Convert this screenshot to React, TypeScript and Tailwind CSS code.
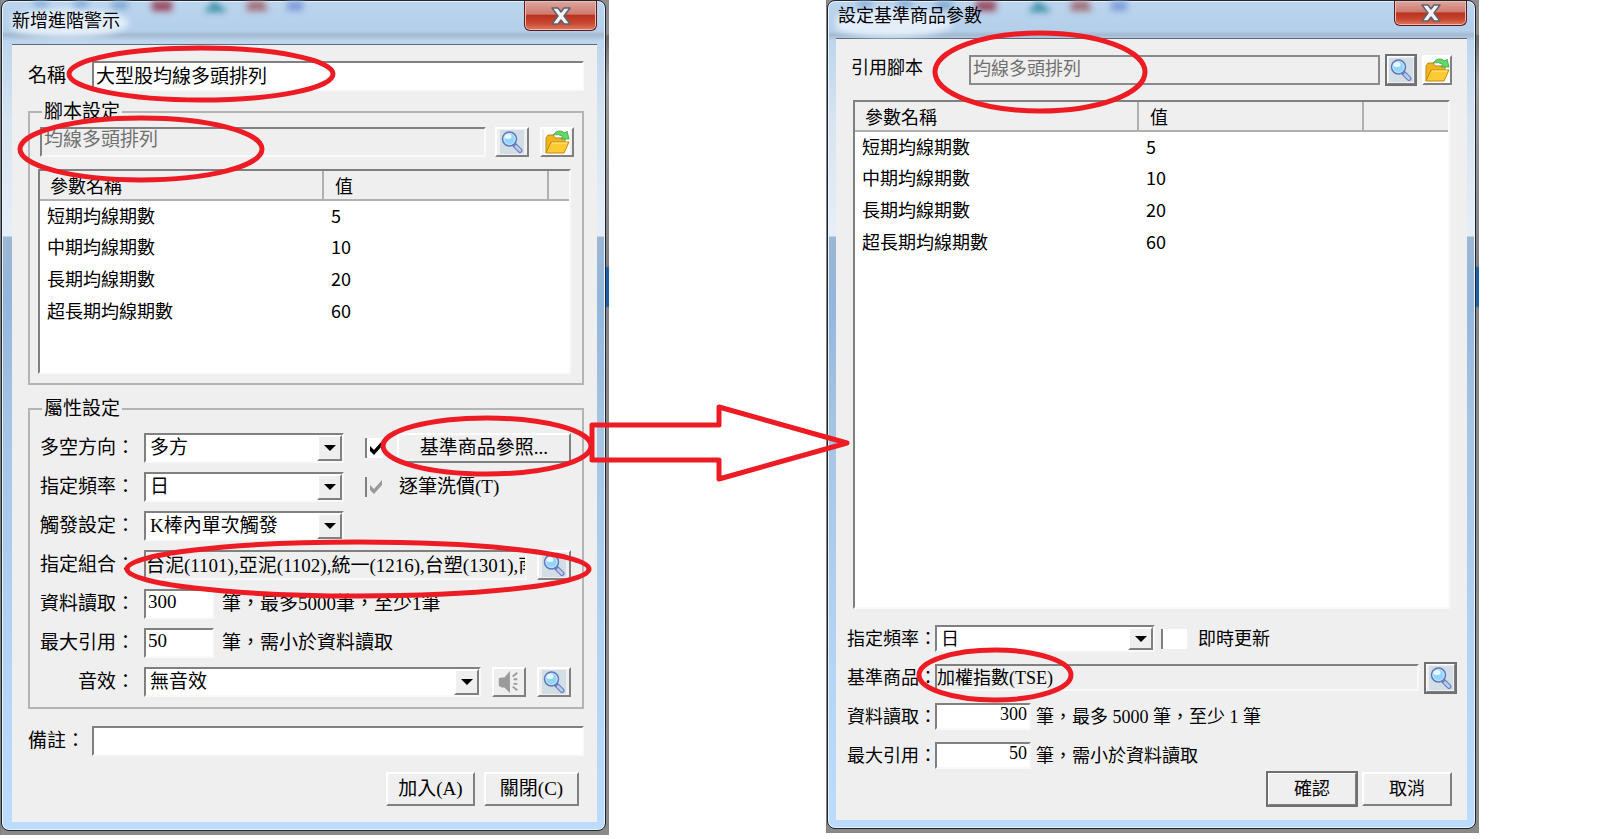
import type { ComponentProps, ReactNode } from 'react'
import { clsx } from 'clsx'

const SANS = "font-['Noto_Sans_CJK_TC',sans-serif]"
const SERIF = "font-['Liberation_Serif','Noto_Sans_CJK_TC',serif]"

const RAISED = 'border-2 border-t-white border-l-white border-r-[#808080] border-b-[#808080] bg-[#efefef]'
const SUNKEN = 'border-2 border-t-[#808080] border-l-[#808080] border-r-[#f9f9f9] border-b-[#f9f9f9]'

const params = [
  { name: '短期均線期數', value: 5 },
  { name: '中期均線期數', value: 10 },
  { name: '長期均線期數', value: 20 },
  { name: '超長期均線期數', value: 60 },
]

function SearchIcon() {
  return (
    <svg viewBox="0 0 24 24" className="h-6 w-6" aria-hidden="true">
      <rect width="24" height="24" fill="#d3dde6" />
      <path d="M15 15.500l5 5" stroke="#6f82bd" strokeWidth="5" strokeLinecap="round" />
      <path d="M16 16.500l4 4" stroke="#b9cdf2" strokeWidth="2.500" strokeLinecap="round" />
      <circle cx="9.500" cy="9" r="7" fill="#8fd6fa" stroke="#6278be" strokeWidth="1.500" />
      <circle cx="9.500" cy="9" r="5.500" fill="none" stroke="#cfe3fa" />
      <ellipse cx="8" cy="6.500" rx="3.500" ry="2.500" fill="#e9f8ff" />
    </svg>
  )
}

function FolderIcon() {
  return (
    <svg viewBox="0 0 26 26" className="h-[26px] w-[26px]" aria-hidden="true">
      <rect width="26" height="26" fill="#fdfdfd" />
      <path d="M2 24V9l2-3h5l2 3h10v5" fill="#f2b41d" stroke="#b98a17" strokeLinejoin="round" />
      <path d="M2 24l5-11h18l-5 11z" fill="#fcca33" stroke="#c28d12" strokeLinejoin="round" />
      <path d="M8 14h15" stroke="#ffe99a" />
      <path d="M9 6q5-7 12-2l2-2 2 8-8 0 2-2.500q-4-3-10-1.500z" fill="#63d866" stroke="#36a345" strokeWidth=".8" strokeLinejoin="round" />
    </svg>
  )
}

function SpeakerIcon() {
  return (
    <svg viewBox="0 0 26 26" className="h-6 w-6" aria-hidden="true">
      <path d="M2 9l3-1h3l6-7v24l-6-6H5l-3-2z" fill="#9b9b9b" />
      <path d="M17 7l5-4M18 10h4M18 15h4M17 18l5 4" stroke="#9b9b9b" strokeWidth="2" />
    </svg>
  )
}

function IconButton({ label, className, ...props }: ComponentProps<'button'> & { label: string }) {
  return (
    <button
      type="button"
      aria-label={label}
      className={clsx('flex shrink-0 items-center justify-center', RAISED, className)}
      {...props}
    />
  )
}

function TextInput({ className, ...props }: ComponentProps<'input'>) {
  return <input type="text" className={clsx('min-w-0 pb-1 outline-none', SUNKEN, className)} {...props} />
}

function Select({ id, value, className }: { id: string; value: string; className?: string }) {
  return (
    <div className={clsx('relative', className)}>
      <select id={id} defaultValue={value} className={clsx('h-full w-full appearance-none bg-white pr-7 pl-1', SUNKEN)}>
        <option>{value}</option>
      </select>
      <span
        className={clsx(
          'pointer-events-none absolute top-[2px] right-[2px] bottom-[2px] flex w-[25px] items-center justify-center',
          RAISED,
        )}
      >
        <svg viewBox="0 0 12 6" className="h-[6px] w-3" aria-hidden="true">
          <path d="M0 0h12L6 6z" />
        </svg>
      </span>
    </div>
  )
}

function CheckBox({ className, ...props }: ComponentProps<'input'>) {
  return (
    <span className="relative flex shrink-0">
      <input
        type="checkbox"
        className={clsx('h-5 appearance-none border-l-2 border-[#808080] bg-white disabled:bg-transparent', className)}
        {...props}
      />
      {props.defaultChecked && (
        <svg viewBox="0 0 14 14" className="pointer-events-none absolute top-[3px] left-1 h-[14px] w-[14px]" aria-hidden="true">
          <path d="M1 5l4 4 8-9v5l-8 9-4-4z" fill={props.disabled ? '#9a9a9a' : '#000'} />
        </svg>
      )}
    </span>
  )
}

function ParamTable({ className }: { className: string }) {
  return (
    <div className={clsx('bg-white', SUNKEN, SANS, className)}>
      <table className="w-full table-fixed border-collapse text-left text-[18px] leading-6">
        <thead>
          <tr className="h-[29px] border-b-2 border-[#b0b0b0] bg-[#efefef]">
            <th className="w-[283px] border-r-2 border-[#b0b0b0] p-0 pl-[10px] font-normal">參數名稱</th>
            <th className="w-[225px] border-r-2 border-[#b0b0b0] p-0 pl-[11px] font-normal">值</th>
            <th className="p-0" />
          </tr>
        </thead>
        <tbody>
          {params.map((p) => (
            <tr key={p.name} className="h-8">
              <td className="p-0 pb-1 pl-[7px]">{p.name}</td>
              <td className="p-0 pb-1 pl-2">{p.value}</td>
              <td />
            </tr>
          ))}
        </tbody>
      </table>
    </div>
  )
}

interface DialogProps {
  title: string
  frameClass: string
  barClass: string
  children: ReactNode
}

function Dialog({ title, frameClass, barClass, children }: DialogProps) {
  return (
    <div className="border-l border-[#808080] bg-[linear-gradient(#8d8d8d_0_34px,#6b6b6b_36px,#9a9a9a_80px,#808080_266px,#1f5fa8_268px_306px,#858585_308px,#8a8a8a)] pr-[3px] pb-1">
      <section
        className={clsx(
          'rounded-lg border border-[#20262e] bg-[linear-gradient(#bcd5ee_0,#b4cfea_30px,#a3b9d0_34px,#bdd6ee_40px,#d7e4f1_120px,#e6eff8_235px,#9cb7d3_236px,#93b6dc_300px,#a5c3e3_50%,#b4d4f6_80%,#bbdcfd)] pr-2 pb-2 shadow-[inset_0_0_0_1px_#e8f2fc]',
          frameClass,
        )}
      >
        <header className={clsx('relative flex justify-between', barClass)}>
          <svg className="pointer-events-none absolute top-0 left-0 h-9 w-[420px] blur-[3px]" aria-hidden="true">
            <ellipse cx="55" cy="22" rx="62" ry="14" fill="#e3eefa" />
            <path d="M22 0h14v6H22zM62 0h14v7H62zM100 0h16v8h-16z" fill="#7fa9d3" />
            <path d="M140 0h20v10h-20z" fill="#984860" />
            <path d="M202 0l14 11h-24z" fill="#3c8fa5" />
            <path d="M236 0h16l4 10h-22z" fill="#a3707a" />
            <path d="M275 0h16v10h-16z" fill="#7f9fda" />
          </svg>
          <h1 className={clsx('relative text-[18px] leading-6', SANS)}>{title}</h1>
          <button
            type="button"
            aria-label="關閉"
            className="relative flex h-full w-[73px] items-center justify-center rounded-b-md border border-t-0 border-[#5b1c20] bg-[linear-gradient(#dca79f,#cf7a6e_45%,#b9331f_50%,#c8452f_75%,#de7a60)] shadow-[inset_0_0_0_1px_#eebbb0]"
          >
            <svg viewBox="0 0 20 18" className="h-[18px] w-5" aria-hidden="true">
              <path d="M1 1h6l3 4 3-4h6l-6 8 6 8h-6l-3-4-3 4H1l6-8z" fill="#f4f4f4" stroke="#5d6270" strokeWidth="1.500" strokeLinejoin="round" />
            </svg>
          </button>
        </header>
        {children}
      </section>
    </div>
  )
}

function AlertDialog() {
  const label = 'w-[104px] shrink-0 whitespace-nowrap'
  const row = 'flex h-[30px] items-center'
  return (
    <Dialog title="新增進階警示" frameClass="pl-[10px]" barClass="mb-[13px] h-[30px] items-end">
      <form className={clsx('border-t border-[#5b6b7c] bg-[#efefef] pt-4 pr-[13px] pb-4 pl-4 text-[19px] leading-[22px]', SERIF)}>
        <div className={row}>
          <label htmlFor="name" className="w-16 shrink-0">名稱</label>
          <TextInput id="name" defaultValue="大型股均線多頭排列" className="h-full flex-1 bg-white px-[2px]" />
        </div>

        <fieldset className="mt-[10px] border-2 border-[#b4b4b4] pr-2 pb-[9px] pl-2">
          <legend className="ml-1 px-[2px]">腳本設定</legend>
          <div className="mt-1 flex h-[30px] pl-[2px]">
            <TextInput aria-label="腳本" readOnly value="均線多頭排列" className="flex-1 px-[2px] text-[#707070]" />
            <IconButton label="搜尋腳本" className="ml-[9px] w-[34px]"><SearchIcon /></IconButton>
            <IconButton label="開啟腳本" className="ml-[11px] w-[34px]"><FolderIcon /></IconButton>
          </div>
          <ParamTable className="mt-3 mr-[3px] h-[205px]" />
        </fieldset>

        <fieldset className="mt-[13px] border-2 border-[#b4b4b4] pr-[11px] pb-[10px] pl-[10px]">
          <legend className="ml-[2px] px-[2px]">屬性設定</legend>
          <div className="mt-[13px] flex flex-col gap-[9px]">
            <div className={row}>
              <label htmlFor="side" className={label}>多空方向：</label>
              <Select id="side" value="多方" className="h-full w-[200px]" />
              <div className="ml-[21px] flex h-full flex-1 items-center gap-[14px]">
                <CheckBox defaultChecked aria-label="使用基準商品" className="w-[18px]" />
                <button type="button" className={clsx('h-full flex-1 whitespace-nowrap', RAISED)}>基準商品參照...</button>
              </div>
            </div>
            <div className={row}>
              <label htmlFor="freq" className={label}>指定頻率：</label>
              <Select id="freq" value="日" className="h-full w-[200px]" />
              <label className="ml-[21px] flex items-center gap-4">
                <CheckBox defaultChecked disabled className="w-[18px]" />
                逐筆洗價(T)
              </label>
            </div>
            <div className={row}>
              <label htmlFor="trigger" className={label}>觸發設定：</label>
              <Select id="trigger" value="K棒內單次觸發" className="h-full w-[200px]" />
            </div>
            <div className={row}>
              <label htmlFor="group" className={label}>指定組合：</label>
              <TextInput
                id="group"
                readOnly
                value="台泥(1101),亞泥(1102),統一(1216),台塑(1301),南亞(1303)"
                className="h-full flex-1"
              />
              <IconButton label="選擇組合" className="ml-[10px] h-full w-[34px]"><SearchIcon /></IconButton>
            </div>
            <div className={row}>
              <label htmlFor="bars" className={label}>資料讀取：</label>
              <TextInput id="bars" defaultValue="300" className="h-full w-[70px] bg-white px-[2px]" />
              <span className="ml-2">筆，最多5000筆，至少1筆</span>
            </div>
            <div className={row}>
              <label htmlFor="refs" className={label}>最大引用：</label>
              <TextInput id="refs" defaultValue="50" className="h-full w-[70px] bg-white px-[2px]" />
              <span className="ml-2">筆，需小於資料讀取</span>
            </div>
            <div className={row}>
              <label htmlFor="sound" className="w-[104px] shrink-0 pl-[38px]">音效：</label>
              <Select id="sound" value="無音效" className="h-full flex-1" />
              <IconButton label="播放" disabled className="ml-[11px] h-full w-[34px]"><SpeakerIcon /></IconButton>
              <IconButton label="選擇音效" className="ml-[11px] h-full w-[34px]"><SearchIcon /></IconButton>
            </div>
          </div>
        </fieldset>

        <div className={clsx('mt-[17px]', row)}>
          <label htmlFor="note" className="w-16 shrink-0">備註：</label>
          <TextInput id="note" className="h-full flex-1 bg-white px-[2px]" />
        </div>
        <div className="mt-4 flex h-[34px] justify-end gap-[9px] pr-[5px]">
          <button type="button" className={clsx('w-[89px]', RAISED)}>加入(A)</button>
          <button type="button" className={clsx('w-[95px]', RAISED)}>關閉(C)</button>
        </div>
      </form>
    </Dialog>
  )
}

function BaseSymbolDialog() {
  const label = 'w-[88px] shrink-0 whitespace-nowrap'
  const row = 'flex h-[27px] items-center'
  return (
    <Dialog title="設定基準商品參數" frameClass="pl-2" barClass="mb-3 h-[25px] items-end pl-[2px]">
      <form className={clsx('border-t border-[#5b6b7c] bg-[#efefef] px-[11px] pt-4 pb-[14px] text-[18px] leading-[22px]', SERIF)}>
        <div className="flex h-[30px] items-center px-1">
          <label htmlFor="script" className="w-[118px] shrink-0 pb-1">引用腳本</label>
          <input
            id="script"
            readOnly
            value="均線多頭排列"
            className="h-full min-w-0 flex-1 border-2 border-[#8a8a8a] px-[2px] pb-[6px] text-[#707070] outline-none"
          />
          <IconButton label="搜尋腳本" className="ml-[6px] h-full w-[30px] outline-2 -outline-offset-1 outline-[#707070]"><SearchIcon /></IconButton>
          <IconButton label="開啟腳本" className="ml-[6px] h-full w-[30px]"><FolderIcon /></IconButton>
        </div>
        <ParamTable className="mx-[6px] mt-[15px] h-[509px]" />

        <div className="mt-4 flex flex-col gap-3">
          <div className={row}>
            <label htmlFor="base-freq" className={label}>指定頻率：</label>
            <Select id="base-freq" value="日" className="h-full w-[220px]" />
            <label className="ml-[6px] flex items-center gap-[11px]">
              <CheckBox className="w-[26px]" />
              即時更新
            </label>
          </div>
          <div className={row}>
            <label htmlFor="base-symbol" className={label}>基準商品：</label>
            <TextInput id="base-symbol" readOnly value="加權指數(TSE)" className="h-full flex-1" />
            <IconButton label="選擇商品" className="ml-[6px] h-[30px] w-[31px] outline-2 -outline-offset-1 outline-[#707070]"><SearchIcon /></IconButton>
          </div>
          <div className={row}>
            <label htmlFor="base-bars" className={label}>資料讀取：</label>
            <TextInput id="base-bars" defaultValue="300" className="h-full w-24 bg-white px-[2px] text-right" />
            <span className="ml-[5px]">筆，最多 5000 筆，至少 1 筆</span>
          </div>
          <div className={row}>
            <label htmlFor="base-refs" className={label}>最大引用：</label>
            <TextInput id="base-refs" defaultValue="50" className="h-full w-24 bg-white px-[2px] text-right" />
            <span className="ml-[5px]">筆，需小於資料讀取</span>
          </div>
        </div>
        <div className="mt-[3px] flex h-[34px] justify-end gap-[5px] pr-1">
          <button type="submit" className={clsx('w-[90px] outline-2 -outline-offset-1 outline-[#707070]', RAISED)}>確認</button>
          <button type="button" className={clsx('w-[90px]', RAISED)}>取消</button>
        </div>
      </form>
    </Dialog>
  )
}

// red pen marks drawn over both dialogs
function Annotations() {
  return (
    <svg
      viewBox="0 0 1601 839"
      preserveAspectRatio="none"
      className="pointer-events-none absolute top-0 left-0 h-[839px] w-full"
      fill="none"
      stroke="#ed1c24"
      strokeWidth="5"
      strokeLinejoin="round"
      aria-hidden="true"
    >
      <ellipse cx="201" cy="74" rx="132" ry="26" />
      <ellipse cx="141" cy="149" rx="121" ry="31" />
      <ellipse cx="487" cy="446" rx="104" ry="28" />
      <ellipse cx="358" cy="569" rx="231" ry="27" />
      <ellipse cx="1040" cy="72" rx="105" ry="39" />
      <ellipse cx="995" cy="675" rx="76" ry="25" />
      <path d="M592 425H719V407L847 443L719 479V460H592Z" />
    </svg>
  )
}

export default function App() {
  return (
    <main className="relative grid min-h-screen grid-cols-[609fr_217fr_653fr_122fr] items-start bg-white text-black">
      <AlertDialog />
      <div />
      <BaseSymbolDialog />
      <Annotations />
    </main>
  )
}
